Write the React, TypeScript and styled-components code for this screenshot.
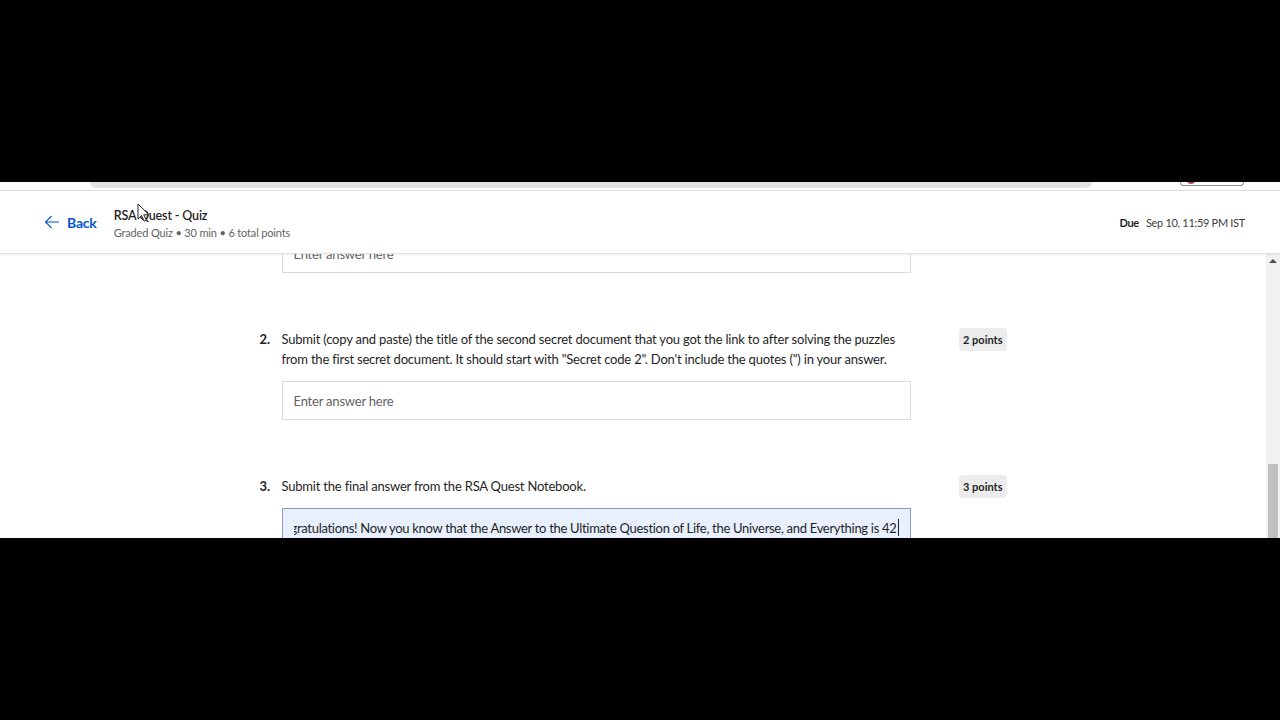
import React from 'react';
import styled, { createGlobalStyle } from 'styled-components';

const GlobalStyle = createGlobalStyle`
  html, body {
    margin: 0;
    padding: 0;
    background: #000;
  }
  body {
    font-family: Lato, "Open Sans", "Liberation Sans", sans-serif;
    color: #1f1f1f;
  }
`;

const questions = [
  {
    num: 2,
    points: '2 points',
    text: 'Submit (copy and paste) the title of the second secret document that you got the link to after solving the puzzles from the first secret document. It should start with "Secret code 2". Don\'t include the quotes (") in your answer.',
    value: '',
  },
  {
    num: 3,
    points: '3 points',
    text: 'Submit the final answer from the RSA Quest Notebook.',
    value:
      'Congratulations! Now you know that the Answer to the Ultimate Question of Life, the Universe, and Everything is 42',
  },
];

const App = () => {
  return (
    <>
      <GlobalStyle />
      <Page>
        <Letterbox />
        <Screen>
          <TopStrip>
            <TabShade />
            <Pill>
              <PillDot />
            </Pill>
          </TopStrip>
          <Header>
            <BackLink>
              <svg width="16" height="16" viewBox="0 0 16 16" fill="none">
                <path d="M15 8H1.5M7.5 2L1.5 8l6 6" stroke="#0056d2" strokeWidth="1.1" />
              </svg>
              <span>Back</span>
            </BackLink>
            <TitleBlock>
              <Title>RSA Quest - Quiz</Title>
              <Meta>Graded Quiz • 30 min • 6 total points</Meta>
            </TitleBlock>
            <Due>
              <strong>Due</strong>
              <span>Sep 10, 11:59 PM IST</span>
            </Due>
          </Header>
          <Body>
            <Scroller>
              <Content>
                <QuestionRow>
                  <span />
                  <Field>
                    <Placeholder>Enter answer here</Placeholder>
                  </Field>
                  <span />
                </QuestionRow>
                {questions.map((q) => (
                  <QuestionRow key={q.num}>
                    <Number>{q.num}.</Number>
                    <QuestionBody>
                      <Prompt>{q.text}</Prompt>
                      {q.value ? (
                        <Field filled>
                          <Viewport>
                            <FilledText>
                              {q.value}
                              <Caret />
                            </FilledText>
                          </Viewport>
                        </Field>
                      ) : (
                        <Field>
                          <Placeholder>Enter answer here</Placeholder>
                        </Field>
                      )}
                    </QuestionBody>
                    <Badge>{q.points}</Badge>
                  </QuestionRow>
                ))}
              </Content>
            </Scroller>
            <ScrollTrack>
              <ArrowUp />
              <Thumb />
            </ScrollTrack>
          </Body>
          <Pointer width="12" height="19" viewBox="0 0 12 19">
            <path d="M1 1v15l3.6-3.4 2.6 5.6 2.2-1-2.6-5.4H12z" fill="#fff" stroke="#222" strokeWidth="1" />
          </Pointer>
        </Screen>
        <Letterbox />
      </Page>
    </>
  );
};

const Page = styled.div`
  width: 1280px;
  height: 720px;
  display: flex;
  flex-direction: column;
  background: #000;
`;

const Letterbox = styled.div`
  height: 182px;
  flex-shrink: 0;
  background: #000;
`;

const Screen = styled.div`
  position: relative;
  height: 356px;
  background: #fff;
  display: flex;
  flex-direction: column;
  overflow: hidden;
`;

const TopStrip = styled.div`
  height: 8px;
  flex-shrink: 0;
  display: flex;
  align-items: flex-start;
  border-bottom: 1px solid #dedede;
  padding-left: 90px;
`;

const TabShade = styled.div`
  width: 1002px;
  height: 6px;
  background: #e2e2e2;
  border-radius: 0 0 10px 10px;
`;

const Pill = styled.div`
  margin-left: 88px;
  width: 62px;
  height: 3px;
  border: 1px solid #7f93ab;
  border-top: none;
  border-radius: 0 0 8px 8px;
  position: relative;
`;

const PillDot = styled.div`
  position: absolute;
  left: 6px;
  top: -2px;
  width: 8px;
  height: 4px;
  border-radius: 0 0 4px 4px;
  background: #b03a63;
`;

const Header = styled.header`
  height: 62px;
  flex-shrink: 0;
  display: flex;
  align-items: center;
  padding: 0 35px 0 44px;
  border-bottom: 1px solid #e1e1e1;
  box-shadow: 0 1px 2px rgba(0, 0, 0, 0.06);
  background: #fff;
  position: relative;
  z-index: 2;
`;

const BackLink = styled.a`
  display: flex;
  align-items: center;
  gap: 7px;
  color: #0056d2;
  font-weight: 700;
  font-size: 14px;
  letter-spacing: -0.2px;
  cursor: pointer;
`;

const TitleBlock = styled.div`
  margin-left: 17px;
  margin-top: 3px;
  display: flex;
  flex-direction: column;
`;

const Title = styled.div`
  font-size: 12.5px;
  font-weight: 600;
  line-height: 18px;
  letter-spacing: -0.15px;
  color: #1f1f1f;
`;

const Meta = styled.div`
  font-size: 11px;
  line-height: 16px;
  letter-spacing: -0.15px;
  color: #636363;
`;

const Due = styled.div`
  margin-left: auto;
  display: flex;
  gap: 7px;
  font-size: 11px;
  letter-spacing: -0.3px;
  color: #3d3d3d;
  strong {
    color: #1f1f1f;
    font-weight: 700;
  }
`;

const Body = styled.div`
  flex: 1;
  display: flex;
  min-height: 0;
`;

const Scroller = styled.div`
  flex: 1;
  overflow: hidden;
`;

const Content = styled.div`
  margin-top: -20px;
  display: flex;
  flex-direction: column;
  gap: 56px;
`;

const QuestionRow = styled.div`
  display: grid;
  grid-template-columns: 22px 629px 96px;
  justify-content: center;
  align-items: start;
`;

const Number = styled.span`
  font-size: 13px;
  font-weight: 700;
  line-height: 20px;
`;

const QuestionBody = styled.div`
  display: flex;
  flex-direction: column;
  gap: 12px;
`;

const Prompt = styled.p`
  margin: 0;
  font-size: 13px;
  line-height: 20px;
  letter-spacing: -0.2px;
  color: #1f1f1f;
`;

const Field = styled.div<{ filled?: boolean }>`
  height: 39px;
  box-sizing: border-box;
  padding: 0 11px;
  display: flex;
  align-items: center;
  white-space: nowrap;
  background: ${(p) => (p.filled ? '#e8f0fe' : '#fff')};
  border: 1px solid ${(p) => (p.filled ? '#8d9bb0' : '#dadada')};
  font-size: 13px;
  letter-spacing: ${(p) => (p.filled ? '-0.3px' : '-0.2px')};
`;

const Viewport = styled.div`
  flex: 1;
  min-width: 0;
  overflow: hidden;
  display: flex;
  justify-content: flex-end;
`;

const Placeholder = styled.span`
  color: #636363;
`;

const FilledText = styled.span`
  flex-shrink: 0;
  color: #1f1f1f;
  display: flex;
  align-items: center;
`;

const Caret = styled.span`
  width: 1px;
  height: 17px;
  background: #1f1f1f;
  margin-left: 1px;
`;

const Badge = styled.span`
  justify-self: end;
  margin-top: -1px;
  padding: 3px 4px;
  border-radius: 4px;
  background: #ececec;
  font-size: 11px;
  font-weight: 700;
  line-height: 17px;
  color: #1f1f1f;
`;

const ScrollTrack = styled.div`
  width: 14px;
  flex-shrink: 0;
  background: #f1f1f1;
  display: flex;
  flex-direction: column;
  align-items: center;
  justify-content: space-between;
  padding-top: 5px;
`;

const ArrowUp = styled.div`
  width: 0;
  height: 0;
  border-left: 4px solid transparent;
  border-right: 4px solid transparent;
  border-bottom: 4px solid #505050;
`;

const Thumb = styled.div`
  width: 10px;
  height: 74px;
  background: #c1c1c1;
`;

const Pointer = styled.svg`
  position: absolute;
  left: 137px;
  top: 21px;
  z-index: 5;
`;

export default App;
